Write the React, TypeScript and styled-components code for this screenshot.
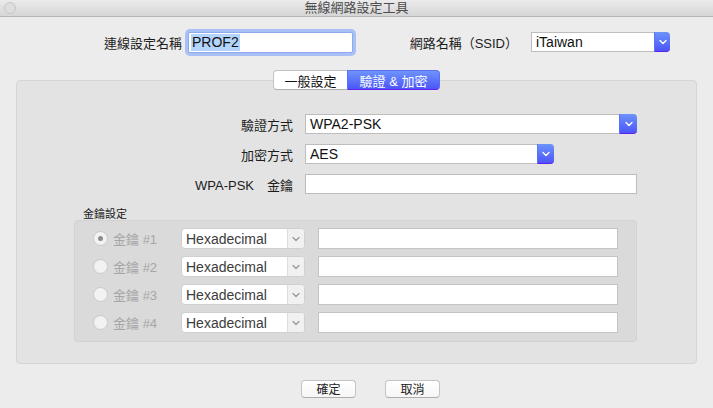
import React from 'react'
import styled, { createGlobalStyle } from 'styled-components'

const GlobalStyle = createGlobalStyle`
    html, body {
        margin: 0;
        padding: 0;
        background: #ececec;
    }
    body {
        font-family: "Liberation Sans", "Noto Sans CJK TC", sans-serif;
        font-size: 13px;
        color: #1a1a1a;
    }
`

const Window = styled.div`
    width: 713px;
    height: 408px;
    display: flex;
    flex-direction: column;
    background: #ececec;
    overflow: hidden;
`

const TitleBar = styled.div`
    height: 16px;
    display: grid;
    grid-template-columns: 1fr auto 1fr;
    align-items: center;
    background: linear-gradient(#ebebeb, #d6d6d6);
    border-bottom: 1px solid #b4b4b4;
`

const WindowButton = styled.span`
    width: 10px;
    height: 10px;
    margin-left: 4px;
    border-radius: 50%;
    border: 1px solid #c6c6c6;
    background: #dedede;
`

const Title = styled.div`
    font-size: 13px;
    color: #4d4d4d;
    line-height: 16px;
`

const TopRow = styled.div`
    display: flex;
    align-items: center;
    height: 22px;
    margin-top: 14px;
`

const FieldLabel = styled.label<{ $width: number; $gap: number }>`
    width: ${p => p.$width}px;
    margin-right: ${p => p.$gap}px;
    flex: none;
    text-align: right;
    font-size: 13px;
    color: #1c1c1c;
    white-space: pre;
`

const TextField = styled.div<{ $width: number; $focused?: boolean; $height?: number }>`
    width: ${p => p.$width}px;
    height: ${p => p.$height ?? 20}px;
    box-sizing: border-box;
    flex: none;
    display: flex;
    align-items: center;
    padding-left: 2px;
    background: #fff;
    border: 1px solid ${p => (p.$focused ? '#8fa9ec' : '#bcbcbc')};
    border-radius: ${p => (p.$focused ? '2px' : '0')};
    box-shadow: ${p => (p.$focused ? '0 0 0 3px #a9c0f7' : 'none')};
    font-size: 14px;
    color: #111;
`

const Selected = styled.span`
    background: #b3d5fd;
    padding: 0 1px;
    line-height: 17px;
`

const SelectBox = styled.div<{ $width: number; $disabled?: boolean; $height?: number }>`
    width: ${p => p.$width}px;
    height: ${p => p.$height ?? 20}px;
    box-sizing: border-box;
    flex: none;
    display: flex;
    background: #fff;
    border: 1px solid ${p => (p.$disabled ? '#d0d0d0' : '#bdbdbd')};
    border-right: none;
    border-radius: ${p => (p.$disabled ? '4px' : '0 4px 4px 0')};
    ${p => p.$disabled && 'border-right: 1px solid #d0d0d0;'}
`

const SelectValue = styled.div<{ $disabled?: boolean }>`
    flex: 1;
    display: flex;
    align-items: center;
    padding-left: 4px;
    font-size: 14px;
    color: ${p => (p.$disabled ? '#3c3c3c' : '#111')};
`

const SelectArrow = styled.div<{ $width: number; $disabled?: boolean }>`
    width: ${p => p.$width}px;
    flex: none;
    display: flex;
    align-items: center;
    justify-content: center;
    margin: ${p => (p.$disabled ? '0' : '-1px 0')};
    border-radius: ${p => (p.$disabled ? '0 3px 3px 0' : '0 4px 4px 0')};
    background: ${p => (p.$disabled ? '#f1f1f1' : 'linear-gradient(#6c93fc, #4c55f8)')};
    border-left: 1px solid ${p => (p.$disabled ? '#dedede' : '#5a74f6')};
    border-bottom: ${p => (p.$disabled ? 'none' : '1px solid #5e1ff0')};
    box-sizing: border-box;
`

const Chevron = ({ color }: { color: string }) => (
    <svg width="8" height="6" viewBox="0 0 8 6">
        <polyline points="1,1.5 4,4.5 7,1.5" fill="none" stroke={color} strokeWidth="1.4" strokeLinecap="round" strokeLinejoin="round" />
    </svg>
)

type SelectProps = { value: string; width: number; arrow: number; disabled?: boolean; height?: number }

const Select = ({ value, width, arrow, disabled, height }: SelectProps) => (
    <SelectBox $width={width} $disabled={disabled} $height={height}>
        <SelectValue $disabled={disabled}>{value}</SelectValue>
        <SelectArrow $width={arrow} $disabled={disabled}>
            <Chevron color={disabled ? '#9c9c9c' : '#ffffff'} />
        </SelectArrow>
    </SelectBox>
)

const TabBar = styled.div`
    position: relative;
    z-index: 1;
    display: flex;
    justify-content: center;
    margin-top: 17px;
    margin-bottom: -10px;
`

const Tab = styled.div<{ $active?: boolean; $width: number }>`
    width: ${p => p.$width}px;
    height: 20px;
    box-sizing: border-box;
    display: flex;
    align-items: center;
    justify-content: center;
    font-size: 13px;
    color: ${p => (p.$active ? '#ffffff' : '#111')};
    background: ${p => (p.$active ? 'linear-gradient(#6d94fc, #4b56f8)' : '#ffffff')};
    border: 1px solid ${p => (p.$active ? '#5a6ff6' : '#c3c3c3')};
    border-bottom-color: ${p => (p.$active ? '#5f22ef' : '#b0b0b0')};
    border-radius: ${p => (p.$active ? '0 4px 4px 0' : '4px 0 0 4px')};
    ${p => !p.$active && 'border-right: none;'}
`

const Panel = styled.div`
    margin: 0 16px;
    padding: 33px 0 21px;
    background: #e3e3e3;
    border: 1px solid #d5d5d5;
    border-radius: 4px;
`

const FormRows = styled.div`
    display: flex;
    flex-direction: column;
    gap: 10px;
`

const FormRow = styled.div`
    display: flex;
    align-items: center;
    height: 20px;
`

const GroupLabel = styled.div`
    margin: 14px 0 0 66px;
    font-size: 11px;
    line-height: 12px;
    color: #1a1a1a;
`

const Group = styled.div`
    margin-left: 57px;
    width: 563px;
    box-sizing: border-box;
    padding: 7px 20px 8px 18px;
    background: #dadada;
    border: 1px solid #d3d3d3;
    border-radius: 4px;
    display: flex;
    flex-direction: column;
    gap: 7px;
`

const KeyRow = styled.div`
    display: flex;
    align-items: center;
    height: 21px;
`

const KeyCell = styled.div`
    width: 88px;
    flex: none;
    display: flex;
    align-items: center;
    gap: 5px;
`

const Radio = styled.span<{ $checked?: boolean }>`
    width: 15px;
    height: 15px;
    box-sizing: border-box;
    border-radius: 50%;
    border: 1px solid #c9c9c9;
    background: #f2f2f2;
    display: flex;
    align-items: center;
    justify-content: center;
    &::after {
        content: '';
        width: 5px;
        height: 5px;
        border-radius: 50%;
        background: ${p => (p.$checked ? '#8c8c8c' : 'transparent')};
    }
`

const KeyLabel = styled.span`
    font-size: 13px;
    color: #a6a6a6;
`

const KeyInput = styled(TextField)`
    margin-left: 13px;
    border-color: #c4c4c4;
`

const ButtonRow = styled.div`
    display: flex;
    justify-content: center;
    gap: 29px;
    padding-left: 28px;
    margin-top: 16px;
`

const PushButton = styled.button`
    width: 55px;
    height: 18px;
    padding: 0;
    box-sizing: border-box;
    font-family: "Noto Sans CJK TC", sans-serif;
    font-size: 12px;
    line-height: 16px;
    color: #222;
    background: linear-gradient(#ffffff, #f6f6f6);
    border: 1px solid #c4c4c4;
    border-bottom-color: #acacac;
    border-radius: 4px;
`

const keys = ['#1', '#2', '#3', '#4']

const App = () => {
    return (
        <>
            <GlobalStyle />
            <Window>
                <TitleBar>
                    <WindowButton />
                    <Title>無線網路設定工具</Title>
                    <span />
                </TitleBar>

                <TopRow>
                    <FieldLabel $width={182} $gap={6}>連線設定名稱</FieldLabel>
                    <TextField $width={165} $height={21} $focused>
                        <Selected>PROF2</Selected>
                    </TextField>
                    <FieldLabel $width={165} $gap={13}>網路名稱（SSID）</FieldLabel>
                    <Select value="iTaiwan" width={139} arrow={16} />
                </TopRow>

                <TabBar>
                    <Tab $width={74}>一般設定</Tab>
                    <Tab $width={93} $active>驗證 &amp; 加密</Tab>
                </TabBar>

                <Panel>
                    <FormRows>
                        <FormRow>
                            <FieldLabel $width={276} $gap={12}>驗證方式</FieldLabel>
                            <Select value="WPA2-PSK" width={332} arrow={18} />
                        </FormRow>
                        <FormRow>
                            <FieldLabel $width={276} $gap={12}>加密方式</FieldLabel>
                            <Select value="AES" width={249} arrow={17} />
                        </FormRow>
                        <FormRow>
                            <FieldLabel $width={276} $gap={12}>WPA-PSK　金鑰</FieldLabel>
                            <TextField $width={332} />
                        </FormRow>
                    </FormRows>

                    <GroupLabel>金鑰設定</GroupLabel>
                    <Group>
                        {keys.map((k, i) => (
                            <KeyRow key={k}>
                                <KeyCell>
                                    <Radio $checked={i === 0} />
                                    <KeyLabel>金鑰 {k}</KeyLabel>
                                </KeyCell>
                                <Select value="Hexadecimal" width={124} arrow={17} height={21} disabled />
                                <KeyInput $width={300} $height={21} />
                            </KeyRow>
                        ))}
                    </Group>
                </Panel>

                <ButtonRow>
                    <PushButton>確定</PushButton>
                    <PushButton>取消</PushButton>
                </ButtonRow>
            </Window>
        </>
    )
}

export default App
